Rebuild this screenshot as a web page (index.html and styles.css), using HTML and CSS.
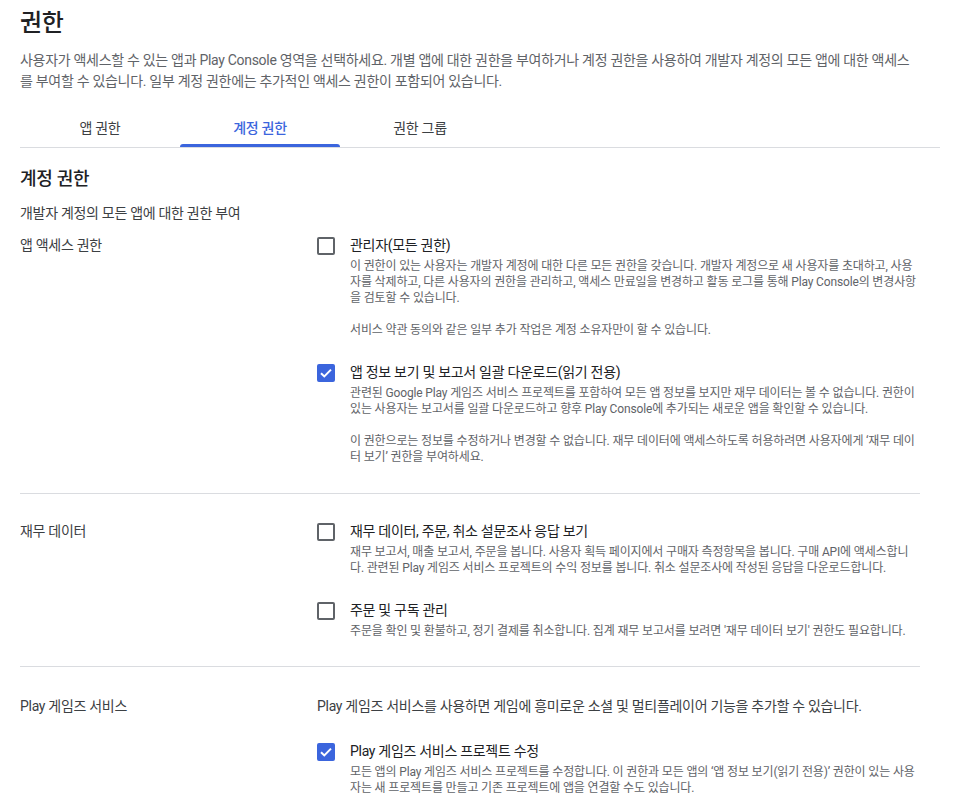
FILE: index.html
```html
<!DOCTYPE html>
<html lang="ko">
<head>
    <meta charset="UTF-8">
    <meta name="viewport" content="width=device-width, initial-scale=1.0">
    <title>권한</title>
    <link rel="stylesheet" href="styles.css">
</head>
<body>
    <div class="page">
        <h1 class="title">권한</h1>
        <p class="intro">사용자가 액세스할 수 있는 앱과 Play Console 영역을 선택하세요. 개별 앱에 대한 권한을 부여하거나 계정 권한을 사용하여 개발자 계정의 모든 앱에 대한 액세스를 부여할 수 있습니다. 일부 계정 권한에는 추가적인 액세스 권한이 포함되어 있습니다.</p>

        <div class="tabs">
            <div class="tab">앱 권한</div>
            <div class="tab active">계정 권한</div>
            <div class="tab">권한 그룹</div>
        </div>

        <h2 class="section-title">계정 권한</h2>
        <p class="section-sub">개발자 계정의 모든 앱에 대한 권한 부여</p>

        <div class="group first">
            <div class="group-label">앱 액세스 권한</div>
            <div class="group-body">
                <div class="perm">
                    <span class="checkbox"></span>
                    <div class="perm-text">
                        <div class="perm-name">관리자(모든 권한)</div>
                        <p class="perm-desc">이 권한이 있는 사용자는 개발자 계정에 대한 다른 모든 권한을 갖습니다. 개발자 계정으로 새 사용자를 초대하고, 사용자를 삭제하고, 다른 사용자의 권한을 관리하고, 액세스 만료일을 변경하고 활동 로그를 통해 Play Console의 변경사항을 검토할 수 있습니다.</p>
                        <p class="perm-desc">서비스 약관 동의와 같은 일부 추가 작업은 계정 소유자만이 할 수 있습니다.</p>
                    </div>
                </div>
                <div class="perm">
                    <span class="checkbox checked">
                        <svg width="14" height="14" viewBox="0 0 14 14"><polyline points="2,7.2 5.3,10.4 12,3.6" fill="none" stroke="#fff" stroke-width="2"/></svg>
                    </span>
                    <div class="perm-text">
                        <div class="perm-name">앱 정보 보기 및 보고서 일괄 다운로드(읽기 전용)</div>
                        <p class="perm-desc">관련된 Google Play 게임즈 서비스 프로젝트를 포함하여 모든 앱 정보를 보지만 재무 데이터는 볼 수 없습니다. 권한이 있는 사용자는 보고서를 일괄 다운로드하고 향후 Play Console에 추가되는 새로운 앱을 확인할 수 있습니다.</p>
                        <p class="perm-desc">이 권한으로는 정보를 수정하거나 변경할 수 없습니다. 재무 데이터에 액세스하도록 허용하려면 사용자에게 ‘재무 데이터 보기’ 권한을 부여하세요.</p>
                    </div>
                </div>
            </div>
        </div>

        <div class="group">
            <div class="group-label">재무 데이터</div>
            <div class="group-body">
                <div class="perm">
                    <span class="checkbox"></span>
                    <div class="perm-text">
                        <div class="perm-name">재무 데이터, 주문, 취소 설문조사 응답 보기</div>
                        <p class="perm-desc">재무 보고서, 매출 보고서, 주문을 봅니다. 사용자 획득 페이지에서 구매자 측정항목을 봅니다. 구매 API에 액세스합니다. 관련된 Play 게임즈 서비스 프로젝트의 수익 정보를 봅니다. 취소 설문조사에 작성된 응답을 다운로드합니다.</p>
                    </div>
                </div>
                <div class="perm">
                    <span class="checkbox"></span>
                    <div class="perm-text">
                        <div class="perm-name">주문 및 구독 관리</div>
                        <p class="perm-desc">주문을 확인 및 환불하고, 정기 결제를 취소합니다. 집계 재무 보고서를 보려면 '재무 데이터 보기' 권한도 필요합니다.</p>
                    </div>
                </div>
            </div>
        </div>

        <div class="group last">
            <div class="group-label">Play 게임즈 서비스</div>
            <div class="group-body">
                <p class="group-note">Play 게임즈 서비스를 사용하면 게임에 흥미로운 소셜 및 멀티플레이어 기능을 추가할 수 있습니다.</p>
                <div class="perm">
                    <span class="checkbox checked">
                        <svg width="14" height="14" viewBox="0 0 14 14"><polyline points="2,7.2 5.3,10.4 12,3.6" fill="none" stroke="#fff" stroke-width="2"/></svg>
                    </span>
                    <div class="perm-text">
                        <div class="perm-name">Play 게임즈 서비스 프로젝트 수정</div>
                        <p class="perm-desc">모든 앱의 Play 게임즈 서비스 프로젝트를 수정합니다. 이 권한과 모든 앱의 ‘앱 정보 보기(읽기 전용)’ 권한이 있는 사용자는 새 프로젝트를 만들고 기존 프로젝트에 앱을 연결할 수도 있습니다.</p>
                    </div>
                </div>
            </div>
        </div>
    </div>
</body>
</html>
```

FILE: styles.css
```css
html { overflow: hidden; }
body { margin: 0; background: #fff; color: #202124; font-family: Roboto, "Noto Sans CJK KR", sans-serif; font-feature-settings: "palt"; letter-spacing: -0.3px; }
.page { padding: 7px 17px 0 20px; }

.title { margin: 0; font-size: 24px; line-height: 32px; font-weight: 500; }
.intro { max-width: 895px; margin: 11px 0 0; font-size: 14px; line-height: 21px; color: #5f6368; }

/* tabs */
.tabs { display: flex; margin-top: 15px; border-bottom: 1px solid #dadce0; }
.tab { position: relative; width: 160px; height: 40px; display: flex; align-items: center; justify-content: center; font-size: 14px; color: #3c4043; }
.tab.active { color: #3b65dd; font-weight: 500; }
.tab.active::after { content: ""; position: absolute; left: 0; right: 0; bottom: 0; height: 3px; background: #3b65dd; border-radius: 3px 3px 0 0; }

.section-title { margin: 19px 0 0; font-size: 18px; line-height: 24px; font-weight: 500; }
.section-sub { margin: 12px 0 0; font-size: 14px; line-height: 20px; color: #3c4043; }

/* permission groups */
.group { display: grid; grid-template-columns: 297px 1fr; width: 900px; padding: 27px 0 27px; border-bottom: 1px solid #dadce0; }
.group.first { padding-top: 12px; padding-bottom: 28px; }
.group.last { border-bottom: none; padding-top: 29px; }
.group-label { font-size: 14px; line-height: 20px; color: #3c4043; }
.group-note { margin: 0 0 25px; font-size: 14px; line-height: 20px; color: #3c4043; }

.perm { display: flex; gap: 15px; }
.perm + .perm { margin-top: 24px; }
.checkbox { flex: none; box-sizing: border-box; width: 18px; height: 18px; margin-top: 2px; border: 2px solid #5f6368; border-radius: 2px; display: flex; align-items: center; justify-content: center; }
.checkbox.checked { background: #3b65dd; border-color: #3b65dd; }
.perm-text { flex: 1; }
.perm-name { font-size: 14px; line-height: 20px; color: #202124; }
.perm-desc { margin: 3px 0 0; font-size: 12px; line-height: 16px; color: #5f6368; letter-spacing: -0.15px; }
.perm-desc + .perm-desc { margin-top: 16px; }
```
